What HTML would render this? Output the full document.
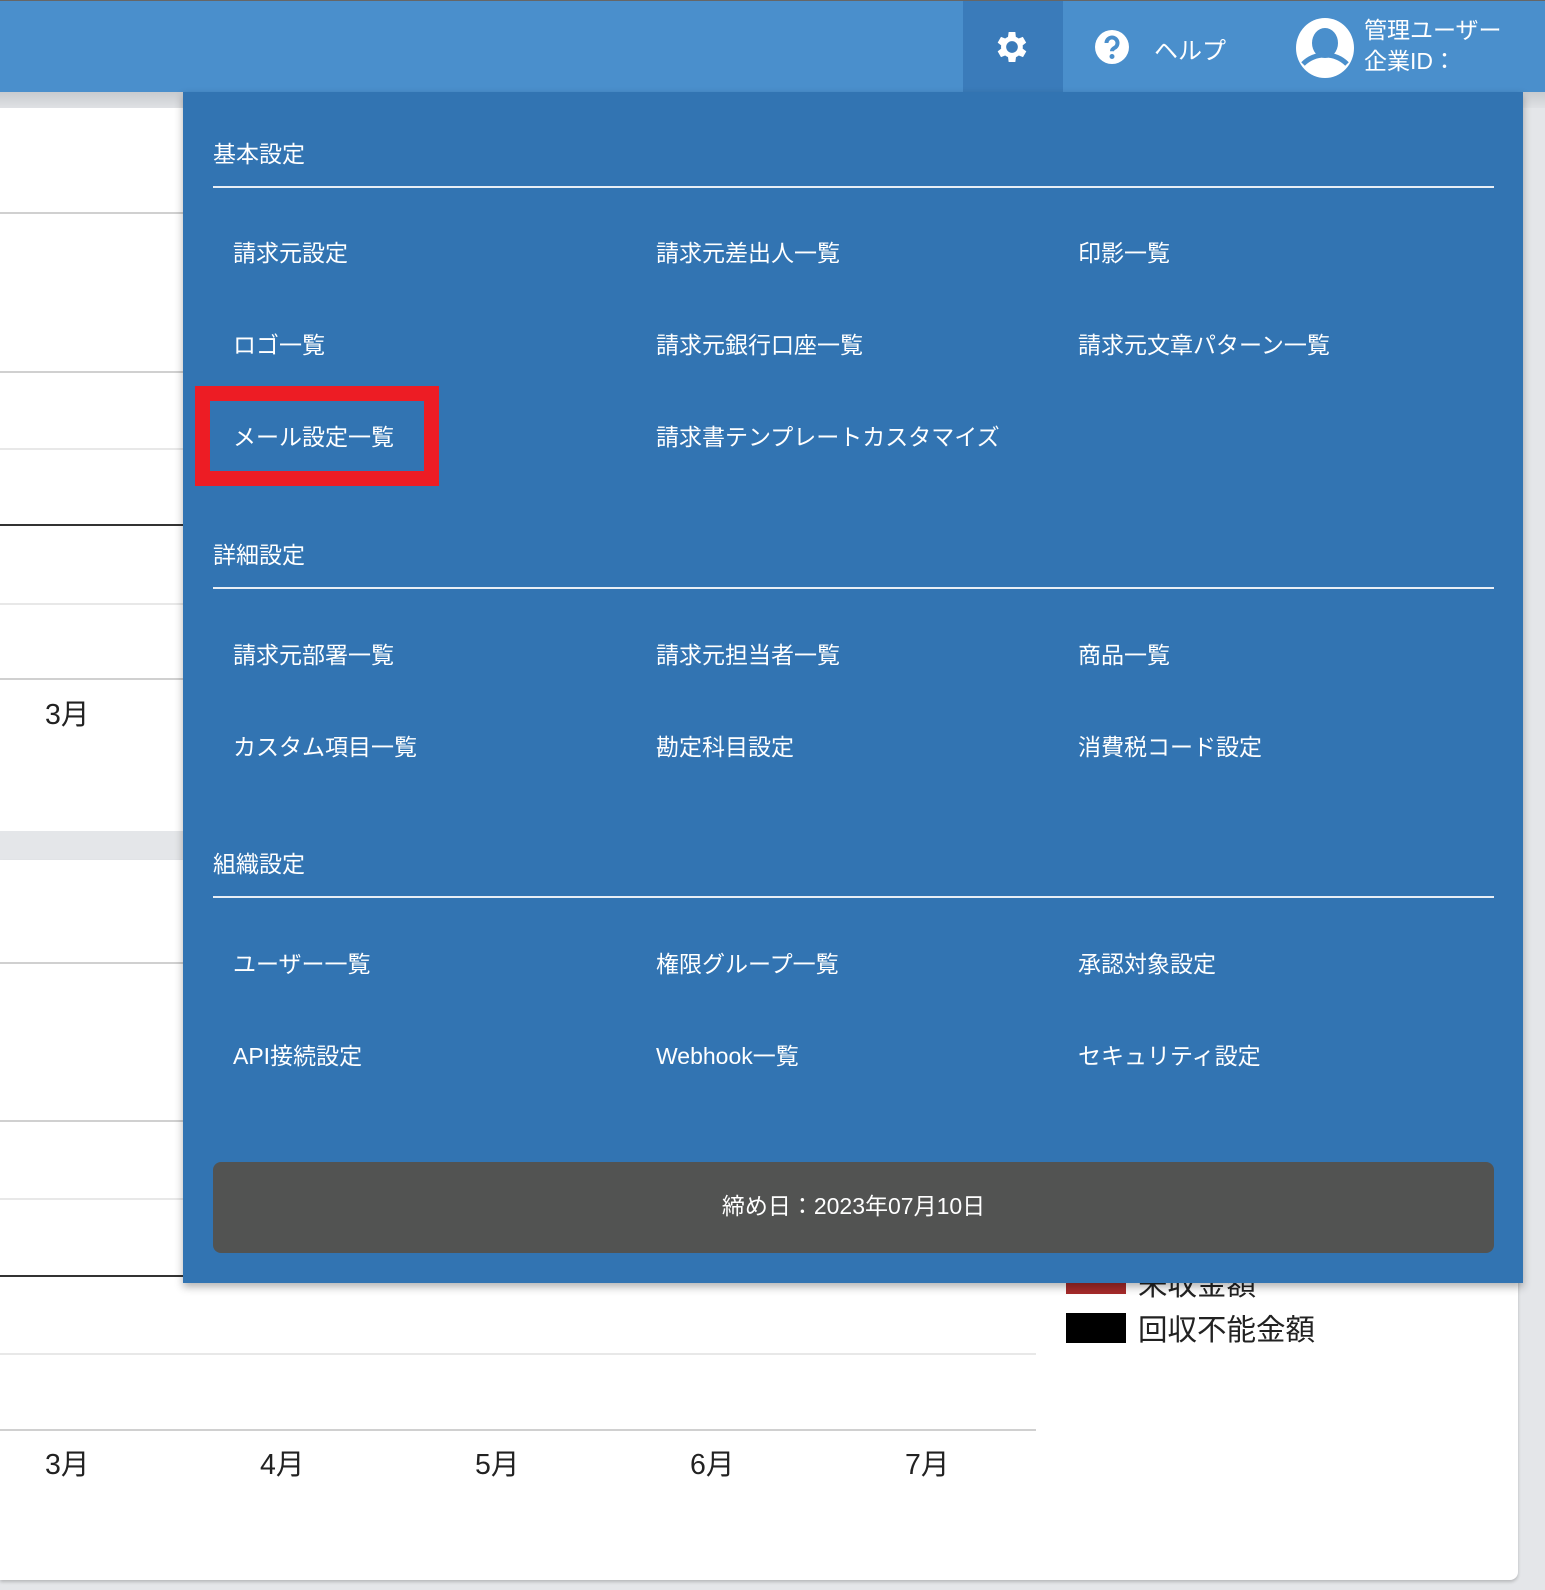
<!DOCTYPE html>
<html><head><meta charset="utf-8"><style>
*{margin:0;padding:0;box-sizing:border-box}
body{width:1545px;height:1590px;background:#e4e6e9;position:relative;overflow:hidden;font-family:"Liberation Sans","Noto Sans CJK JP",sans-serif}
.abs{position:absolute}
.hdr{left:0;top:0;width:1545px;height:92px;background:#4a8fcc;border-top:1px solid #666}
.card{background:#fff}
.hl{position:absolute;left:0;height:2px;background:#d0d0d0}
.dl{position:absolute;left:0;height:2px;background:#333}
.m{position:absolute;font-size:28.5px;color:#222}
.dd{left:183px;top:92px;width:1340px;height:1191px;background:#3274b2;box-shadow:0 4px 8px rgba(0,0,0,.3)}
.h{position:absolute;left:30px;font-size:23px;color:#fff;line-height:1}
.ln{position:absolute;left:30px;width:1281px;height:2px;background:#e8eef5}
.it{position:absolute;font-size:23px;color:#fff;line-height:1}
</style></head><body>
<div class="abs card" style="left:0;top:108px;width:1518px;height:723px"></div>
<div class="abs card" style="left:0;top:860px;width:1518px;height:720px;border-radius:0 0 8px 0;box-shadow:0 2px 3px rgba(0,0,0,.2)"></div>
<div class="abs" style="left:0;top:92px;width:1545px;height:16px;background:linear-gradient(#c8cbcf,#dfe1e4)"></div>
<div class="hl" style="top:212px;width:1040px"></div>
<div class="hl" style="top:371px;width:1040px"></div>
<div class="hl" style="top:448px;width:1040px;background:#e8e8e8"></div>
<div class="dl" style="top:524px;width:1040px"></div>
<div class="hl" style="top:603px;width:1040px;background:#e8e8e8"></div>
<div class="hl" style="top:678px;width:1040px"></div>
<div class="m" style="left:45px;top:692px">3月</div>
<div class="hl" style="top:962px;width:1040px"></div>
<div class="hl" style="top:1120px;width:1040px"></div>
<div class="hl" style="top:1198px;width:1040px;background:#e8e8e8"></div>
<div class="dl" style="top:1275px;width:1040px"></div>
<div class="hl" style="top:1353px;width:1036px;background:#e8e8e8"></div>
<div class="hl" style="top:1429px;width:1036px"></div>
<div class="m" style="left:45px;top:1442px">3月</div>
<div class="m" style="left:260px;top:1442px">4月</div>
<div class="m" style="left:475px;top:1442px">5月</div>
<div class="m" style="left:690px;top:1442px">6月</div>
<div class="m" style="left:905px;top:1442px">7月</div>
<div class="abs" style="left:1066px;top:1270px;width:60px;height:24px;background:#a52a2a"></div>
<div class="m" style="left:1138px;top:1262px;font-size:29.5px">未収金額</div>
<div class="abs" style="left:1066px;top:1313px;width:60px;height:30px;background:#000"></div>
<div class="m" style="left:1138px;top:1307px;font-size:29.5px">回収不能金額</div>

<div class="abs hdr">
 <div class="abs" style="left:963px;top:0;width:100px;height:91px;background:#3a7bba"></div>
 <svg class="abs" style="left:992px;top:26px" width="40" height="40" viewBox="0 0 24 24"><path fill="#fff" d="M19.4 13a7.5 7.5 0 0 0 0-2l2.1-1.6-2-3.5-2.5 1a7 7 0 0 0-1.7-1L15 3h-4l-.4 2.9a7 7 0 0 0-1.7 1l-2.5-1-2 3.5L6.5 11a7.5 7.5 0 0 0 0 2l-2.1 1.6 2 3.5 2.5-1a7 7 0 0 0 1.7 1L11 21h4l.4-2.9a7 7 0 0 0 1.7-1l2.5 1 2-3.5zM13 15.5a3.5 3.5 0 1 1 0-7 3.5 3.5 0 0 1 0 7z" transform="translate(-1 0)"/></svg>
 <svg class="abs" style="left:1094px;top:28px" width="36" height="36" viewBox="0 0 36 36"><circle cx="18" cy="18" r="17" fill="#fff"/><path d="M12.5 14a5.5 5.5 0 1 1 8 4.9c-1.5.8-2.5 1.6-2.5 3.4" fill="none" stroke="#4a8fcc" stroke-width="4"/><circle cx="18" cy="27.5" r="2.5" fill="#4a8fcc"/></svg>
 <div class="abs" style="left:1154px;top:30px;font-size:24px;color:#fff">ヘルプ</div>
 <svg class="abs" style="left:1296px;top:17px" width="58" height="60" viewBox="0 0 58 60"><ellipse cx="29" cy="30" rx="29" ry="30" fill="#fff"/><ellipse cx="29" cy="25" rx="13" ry="15" fill="#4a8fcc"/><path d="M7 46c6-6 14-9 22-9s16 3 22 9" fill="none" stroke="#4a8fcc" stroke-width="5"/></svg>
 <div class="abs" style="left:1364px;top:14px;font-size:23px;color:#fff;line-height:31px">管理ユーザー<br>企業ID：</div>
</div>

<div class="abs dd">
 <div class="h" style="top:51px">基本設定</div>
 <div class="ln" style="top:94px"></div>
 <div class="it" style="left:50px;top:150px">請求元設定</div>
 <div class="it" style="left:473px;top:150px">請求元差出人一覧</div>
 <div class="it" style="left:895px;top:150px">印影一覧</div>
 <div class="it" style="left:50px;top:242px">ロゴ一覧</div>
 <div class="it" style="left:473px;top:242px">請求元銀行口座一覧</div>
 <div class="it" style="left:895px;top:242px">請求元文章パターン一覧</div>
 <div class="abs" style="left:12px;top:294px;width:244px;height:100px;border:15px solid #ed1c24"></div>
 <div class="it" style="left:50px;top:334px">メール設定一覧</div>
 <div class="it" style="left:473px;top:334px">請求書テンプレートカスタマイズ</div>

 <div class="h" style="top:452px">詳細設定</div>
 <div class="ln" style="top:495px"></div>
 <div class="it" style="left:50px;top:552px">請求元部署一覧</div>
 <div class="it" style="left:473px;top:552px">請求元担当者一覧</div>
 <div class="it" style="left:895px;top:552px">商品一覧</div>
 <div class="it" style="left:50px;top:644px">カスタム項目一覧</div>
 <div class="it" style="left:473px;top:644px">勘定科目設定</div>
 <div class="it" style="left:895px;top:644px">消費税コード設定</div>

 <div class="h" style="top:761px">組織設定</div>
 <div class="ln" style="top:804px"></div>
 <div class="it" style="left:50px;top:861px">ユーザー一覧</div>
 <div class="it" style="left:473px;top:861px">権限グループ一覧</div>
 <div class="it" style="left:895px;top:861px">承認対象設定</div>
 <div class="it" style="left:50px;top:953px">API接続設定</div>
 <div class="it" style="left:473px;top:953px">Webhook一覧</div>
 <div class="it" style="left:895px;top:953px">セキュリティ設定</div>

 <div class="abs" style="left:30px;top:1070px;width:1281px;height:91px;background:#525352;border-radius:8px;color:#fff;font-size:23px;text-align:center;line-height:89px">締め日：2023年07月10日</div>
</div>
</body></html>
